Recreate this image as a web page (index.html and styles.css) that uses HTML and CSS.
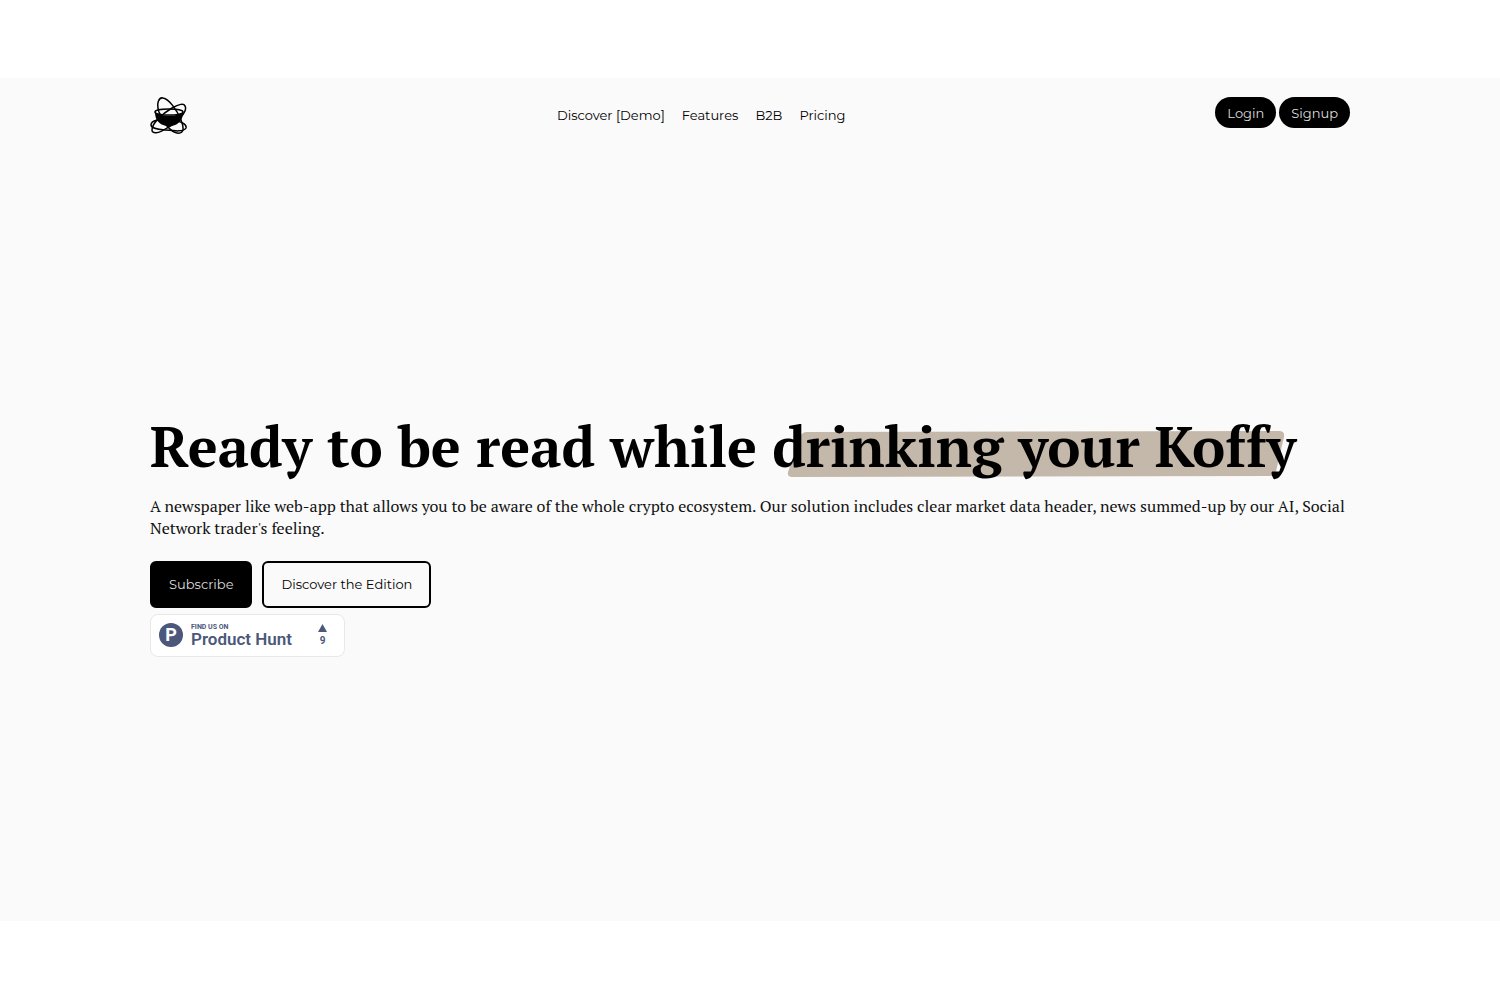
FILE: index.html
```
<!DOCTYPE html>
<html lang="en">
<head>
    <meta charset="UTF-8">
    <meta name="viewport" content="width=device-width, initial-scale=1.0">
    <title>Koffy</title>
    <link rel="stylesheet" href="styles.css">
</head>
<body>

<div class="page">
    <header class="header">
        <a class="logo" href="#" aria-label="Koffy">
            <svg viewBox="0 0 37 38" width="37" height="38">
                <g fill="none" stroke="#000" stroke-width="1.5">
                    <path d="M9 15C6 6 9 0 13 1C19 2 27 13 31 23C35 33 33 37 27 36C21 35 13 26 9 15Z"/>
                    <path d="M35 9C38 14 28 25 17 31C8 37 2 37 2 33C2 26 12 17 22 11C29 7 34 6 35 9Z"/>
                    <path d="M1 28C1 23 10 22 20 23C31 24 37 27 36 31C34 35 25 34 15 33C6 32 1 31 1 28Z"/>
                    <ellipse cx="19" cy="15" rx="14" ry="3"/>
                </g>
                <path d="M5 15C9 20 29 20 33 15C33 22 30 26 25 28L19 30L13 28C8 26 5 22 5 15Z"/>
            </svg>
        </a>
        <nav class="nav">
            <a href="#">Discover [Demo]</a>
            <a href="#">Features</a>
            <a href="#">B2B</a>
            <a href="#">Pricing</a>
        </nav>
        <div class="account">
            <button class="pill">Login</button>
            <button class="pill">Signup</button>
        </div>
    </header>

    <main class="hero">
        <h1>Ready to be read while <span class="marked"><svg class="marker" viewBox="0 0 500 46" preserveAspectRatio="none"><path d="M20 1L494 0Q500 0 499 6L491 40Q490 45 485 45L5 46Q0 46 1 41L13 6Q15 1 20 1Z"/></svg>drinking your Koffy</span></h1>
        <p>A newspaper like web-app that allows you to be aware of the whole crypto ecosystem. Our solution includes clear market data header, news summed-up by our AI, Social Network trader's feeling.</p>
        <div class="actions">
            <button class="btn btn-dark">Subscribe</button>
            <button class="btn">Discover the Edition</button>
        </div>
        <a class="product-hunt" href="#">
            <span class="ph-logo">P</span>
            <span class="ph-text">
                <span class="ph-small">FIND US ON</span>
                <span class="ph-name">Product Hunt</span>
            </span>
            <span class="ph-votes">
                <svg viewBox="0 0 9 8" width="9" height="8"><path d="M4.5 0L9 8H0Z"/></svg>
                <span>9</span>
            </span>
        </a>
    </main>
</div>

</body>
</html>
```
FILE: styles.css
```
* { box-sizing: border-box; }
body { margin: 0; padding: 78px 0; background: #fff; color: #000; font-family: Montserrat, Inter, sans-serif; font-size: 13px; }
a { color: inherit; text-decoration: none; }
button { font: inherit; cursor: pointer; }

.page { display: flex; flex-direction: column; min-height: calc(100vh - 157px); padding: 0 10%; background: #fafafa; }

.header { display: flex; justify-content: space-between; align-items: flex-start; padding: 19px 0 17px; }
.logo svg { display: block; }
.nav { display: flex; gap: 17px; line-height: 36px; }
.account { display: flex; gap: 3px; }
.pill { height: 31px; padding: 0 12px; border: 0; border-radius: 16px; background: #000; color: #ddd; }

.hero { flex: 1; display: flex; flex-direction: column; justify-content: center; align-items: flex-start; padding-bottom: 9px; }
.hero h1 { margin: 0; font-family: "PT Serif", "Liberation Serif", serif; font-size: 56px; line-height: 76px; }
.marked { position: relative; z-index: 0; white-space: nowrap; }
.marker { position: absolute; z-index: -1; left: 15px; bottom: 6px; width: 95%; height: 46px; fill: #c4b8ab; }
.hero p { margin: 11px 0 22px; color: #111; font-family: "PT Serif", "Liberation Serif", serif; font-size: 16px; line-height: 22px; }

.actions { display: flex; gap: 10px; }
.btn { height: 47px; padding: 0 17px; border: 2px solid #000; border-radius: 6px; background: transparent; color: #000; }
.btn-dark { background: #000; color: #ddd; }

.product-hunt { display: flex; align-items: center; width: 195px; height: 43px; margin-top: 6px; padding: 0 17px 0 8px; border: 1px solid #e8e8ec; border-radius: 8px; background: #fff; color: #4b587c; font-family: Roboto, sans-serif; font-weight: 700; }
.ph-logo { width: 24px; height: 24px; margin-right: 8px; border-radius: 50%; background: #4b587c; color: #fff; font-size: 18px; line-height: 24px; text-align: center; }
.ph-text { display: flex; flex-direction: column; flex: 1; }
.ph-small { font-size: 7px; line-height: 8px; }
.ph-name { font-size: 17px; line-height: 17px; font-weight: 600; }
.ph-votes { display: flex; flex-direction: column; align-items: center; gap: 4px; font-size: 10px; line-height: 10px; }
.ph-votes svg { display: block; fill: currentColor; }
```
